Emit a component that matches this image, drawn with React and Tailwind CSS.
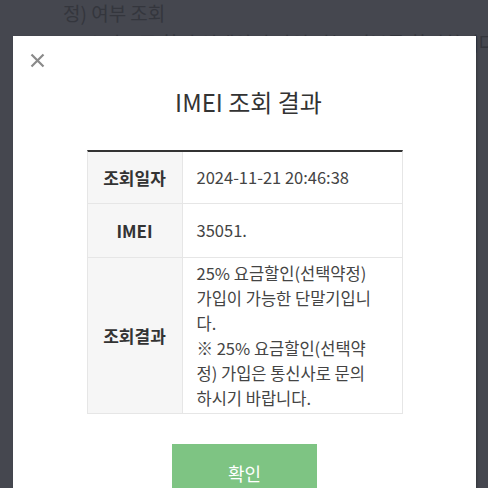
import React from "react";

const font = { fontFamily: '"Noto Sans CJK KR", "Noto Sans", sans-serif' };

function Row({ label, children, className = "" }) {
  return (
    <div className={`flex border-b border-[#e6e6e6] ${className}`}>
      <div className="w-[95px] shrink-0 bg-[#f6f6f6] border-r border-[#e6e6e6] flex items-center justify-center font-bold text-[17px] text-[#333]">
        {label}
      </div>
      <div className="flex-1 pl-[14px] pr-[10px] text-[16.5px] leading-[25px] text-[#444] flex flex-col justify-center">
        {children}
      </div>
    </div>
  );
}

export default function App() {
  return (
    <div style={font} className="relative h-[488px] w-[488px] overflow-hidden bg-[#45474f]">
      <div className="pl-[63px] text-[#34363d] text-[19px] leading-[26px] font-normal whitespace-nowrap">
        <div>정) 여부 조회</div>
        <div className="mt-[4px]">※ 스마트폰 할인 선택약정 가입 가능 여부를 확인합니다</div>
      </div>

      <div className="absolute left-[13px] top-[36px] w-[463px] h-[470px] bg-white shadow-[1px_1px_2px_rgba(0,0,0,0.25)]">
        <button className="absolute left-[16px] top-[16px] w-[16px] h-[16px] flex items-center justify-center" aria-label="close">
          <svg width="15" height="15" viewBox="0 0 15 15">
            <path d="M1.5 1.5 L13.5 13.5 M13.5 1.5 L1.5 13.5" stroke="#8a8a8a" strokeWidth="2.2" strokeLinecap="butt" />
          </svg>
        </button>

        <h2 className="mt-[50px] pl-[8px] text-center text-[24px] leading-[32px] text-[#333] font-normal">
          IMEI 조회 결과
        </h2>

        <div className="mx-auto mt-[32px] w-[316px] border-t-2 border-[#333] border-x border-x-[#e6e6e6]">
          <Row label="조회일자" className="h-[52px]">
            <div>2024-11-21 20:46:38</div>
          </Row>
          <Row label="IMEI" className="h-[54px]">
            <div>35051.</div>
          </Row>
          <Row label="조회결과" className="h-[156px]">
            <div className="whitespace-nowrap">
              <div>25% 요금할인(선택약정)</div>
              <div>가입이 가능한 단말기입니</div>
              <div>다.</div>
              <div>※ 25% 요금할인(선택약</div>
              <div>정) 가입은 통신사로 문의</div>
              <div>하시기 바랍니다.</div>
            </div>
          </Row>
        </div>

        <div className="mt-[30px] flex justify-center">
          <button className="w-[145px] h-[58px] bg-[#7ec483] text-white text-[18px] flex items-center justify-center">
            확인
          </button>
        </div>
      </div>
    </div>
  );
}
